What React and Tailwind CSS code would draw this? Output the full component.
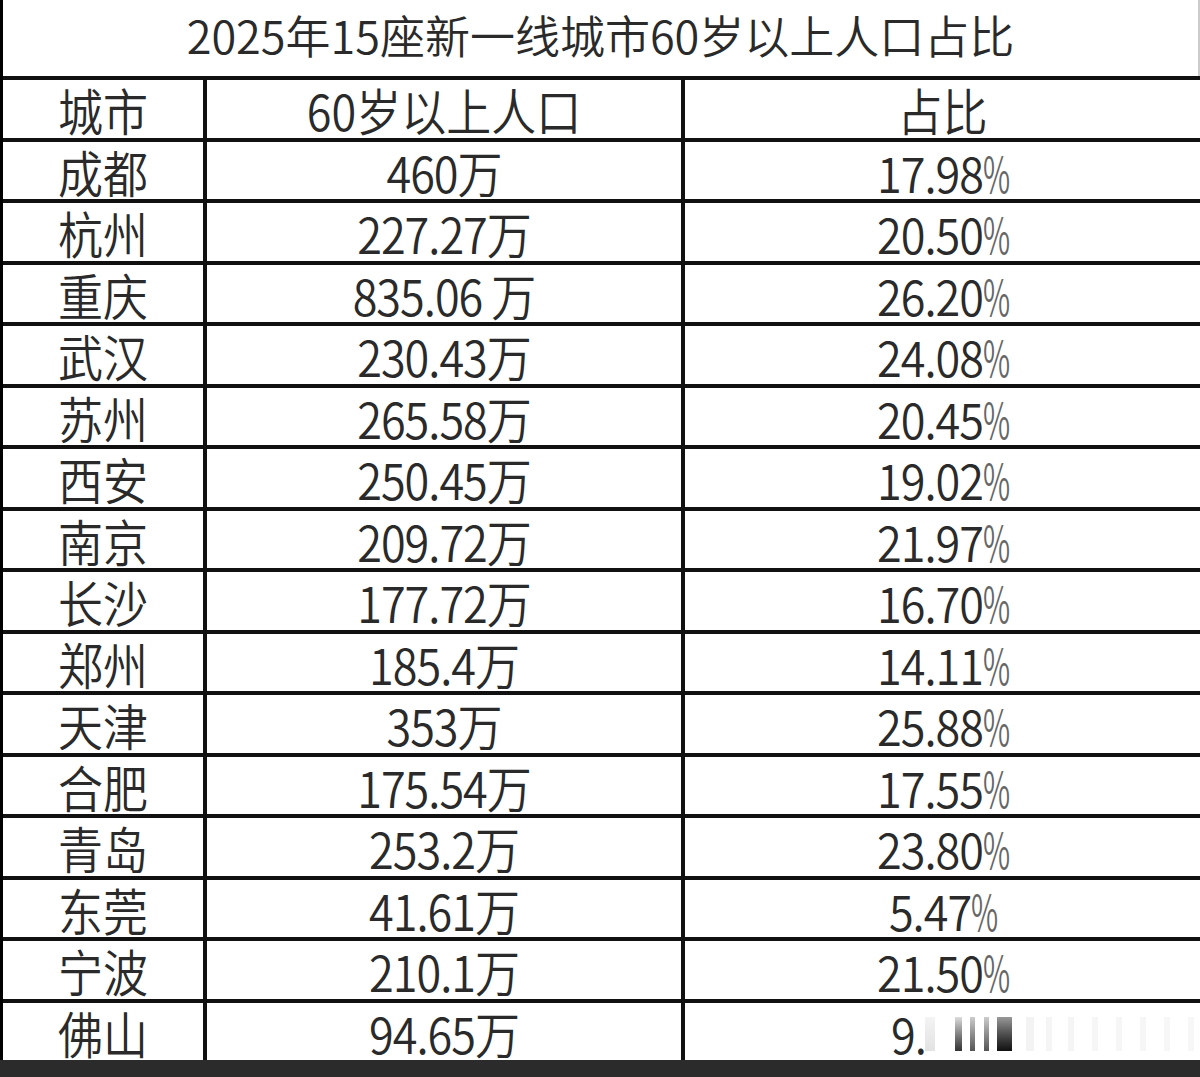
const rows = [
  ["成都", "460万", "17.98"],
  ["杭州", "227.27万", "20.50"],
  ["重庆", "835.06 万", "26.20"],
  ["武汉", "230.43万", "24.08"],
  ["苏州", "265.58万", "20.45"],
  ["西安", "250.45万", "19.02"],
  ["南京", "209.72万", "21.97"],
  ["长沙", "177.72万", "16.70"],
  ["郑州", "185.4万", "14.11"],
  ["天津", "353万", "25.88"],
  ["合肥", "175.54万", "17.55"],
  ["青岛", "253.2万", "23.80"],
  ["东莞", "41.61万", "5.47"],
  ["宁波", "210.1万", "21.50"],
];

function T({ children }) {
  return (
    <span className="inline-block scale-y-110 leading-none whitespace-pre">{children}</span>
  );
}

function N({ children }) {
  return (
    <span className="inline-block scale-y-110 leading-none whitespace-pre tracking-[-1px]">{children}</span>
  );
}

function Pct({ v }) {
  return (
    <span className="inline-flex items-baseline leading-none">
      <N>{v}</N>
      <span className="inline-block w-[25px] overflow-visible">
        <span className="inline-block origin-left scale-x-[0.66] scale-y-110 text-[#666] leading-none">%</span>
      </span>
    </span>
  );
}

function Row({ a, b, c }) {
  return (
    <div className="grid h-[61.5px] grid-cols-[204px_478px_1fr] border-t-4 border-[#111]">
      <div className="flex items-center justify-center border-r-4 border-[#111] pt-[2px]">{a}</div>
      <div className="flex items-center justify-center border-r-4 border-[#111] pt-[2px]">{b}</div>
      <div className="flex items-center justify-center pt-[2px]">{c}</div>
    </div>
  );
}

export default function App() {
  return (
    <div
      className="flex h-[1077px] w-[1200px] flex-col bg-white text-[45px] font-[350] text-[#2a2a2a]"
      style={{ fontFamily: '"Noto Sans CJK SC", "Noto Sans", sans-serif' }}
    >
      <div className="flex flex-col border-l-[3px] border-black">
        <div className="flex h-[76px] items-center justify-center border-r-2 border-[#ccc] pb-[8px] leading-none">
          2025年15座新一线城市60岁以上人口占比
        </div>
        <Row a={<T>城市</T>} b={<T>60岁以上人口</T>} c={<T>占比</T>} />
        {rows.map((r) => (
          <Row key={r[0]} a={<T>{r[0]}</T>} b={<N>{r[1]}</N>} c={<Pct v={r[2]} />} />
        ))}
        <div className="grid h-[61.5px] grid-cols-[204px_478px_1fr] border-t-4 border-[#111]">
          <div className="flex items-center justify-center border-r-4 border-[#111] pt-[2px]">
            <T>佛山</T>
          </div>
          <div className="flex items-center justify-center border-r-4 border-[#111] pt-[2px]">
            <N>94.65万</N>
          </div>
          <div className="relative flex items-center pl-[206px] pt-[2px]">
            <N>9.</N>
            <div className="absolute left-[240px] top-[14px] flex h-[34px] items-stretch">
              <span className="ml-0 w-[10px] bg-gradient-to-b from-[#f4f4f4] to-[#e2e2e2]" />
              <span className="ml-[20px] w-[7px] bg-gradient-to-b from-[#ddd] to-[#333]" />
              <span className="ml-[8px] w-[5px] bg-gradient-to-b from-[#ccc] to-[#555]" />
              <span className="ml-[9px] w-[5px] bg-gradient-to-b from-[#ccc] to-[#555]" />
              <span className="ml-[8px] w-[15px] bg-gradient-to-b from-[#999] to-[#111]" />
              <span className="ml-[14px] w-[8px] bg-[#f3f3f3]" />
              <span className="ml-[12px] w-[6px] bg-[#f5f5f5]" />
              <span className="ml-[16px] w-[6px] bg-[#f5f5f5]" />
              <span className="ml-[18px] w-[6px] bg-[#f6f6f6]" />
              <span className="ml-[18px] w-[6px] bg-[#f6f6f6]" />
              <span className="ml-[18px] w-[6px] bg-[#f6f6f6]" />
              <span className="ml-[18px] w-[6px] bg-[#f7f7f7]" />
              <span className="ml-[18px] w-[6px] bg-[#f7f7f7]" />
            </div>
          </div>
        </div>
      </div>
      <div className="flex-1 bg-[#2b2b2b]" />
    </div>
  );
}
